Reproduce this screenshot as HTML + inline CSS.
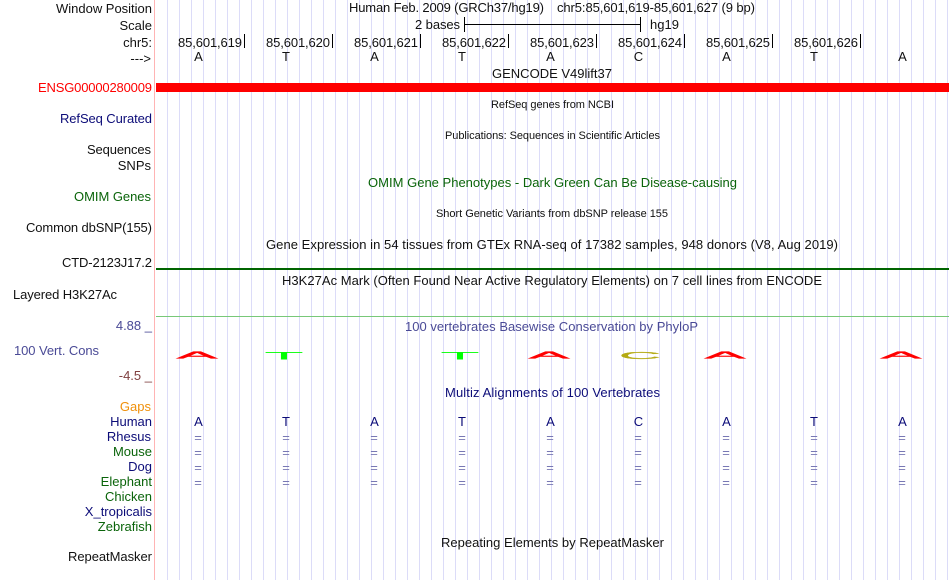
<!DOCTYPE html>
<html><head><meta charset="utf-8"><style>
html,body{margin:0;padding:0;background:#fff;width:950px;height:580px;overflow:hidden}
#p{position:absolute;left:154px;top:0;width:1px;height:580px;background:#ffb4b4}
svg{position:absolute;left:0;top:0}
text{font-family:"Liberation Sans",sans-serif;font-size:13px;fill:#111}
.r{text-anchor:end}
.m{text-anchor:middle}
.s{font-size:11px}
.n{fill:#0c0c78}
.g{fill:#0a640a}
.v{fill:#4a4a96}
.e{fill:#7878b4;font-size:13px;text-anchor:middle}
</style></head><body>
<div id="p"></div>
<svg width="950" height="580" viewBox="0 0 950 580" shape-rendering="auto">
<defs><pattern id="gl" x="167" y="0" width="12" height="580" patternUnits="userSpaceOnUse"><rect x="0" y="0" width="1" height="580" fill="#dcdcf8"/></pattern></defs>
<rect x="167" y="0" width="783" height="580" fill="url(#gl)" shape-rendering="crispEdges"/>
<rect x="156" y="83" width="793" height="9" fill="#f00"/>
<rect x="156" y="268" width="793" height="2" fill="#006400"/>
<rect x="156" y="316" width="793" height="1" fill="#78c878"/>
<path d="M464.5 17V32M464.5 24.5H640.5M640.5 17V32M244.5 34V48M332.5 34V48M420.5 34V48M508.5 34V48M596.5 34V48M684.5 34V48M772.5 34V48M860.5 34V48" stroke="#000" fill="none"/>

<text class="r" x="152" y="13" textLength="96">Window Position</text>
<text class="r" x="152" y="30">Scale</text>
<text class="r" x="152" y="47">chr5:</text>
<text class="r" x="151" y="63">---&gt;</text>
<text class="r" x="152" y="92" style="fill:#f00" textLength="114">ENSG00000280009</text>
<text class="r n" x="152" y="123" textLength="92">RefSeq Curated</text>
<text class="r" x="151" y="154" textLength="64">Sequences</text>
<text class="r" x="151" y="170">SNPs</text>
<text class="r g" x="151" y="201" textLength="77">OMIM Genes</text>
<text class="r" x="152" y="232" textLength="126">Common dbSNP(155)</text>
<text class="r" x="152" y="267" textLength="90">CTD-2123J17.2</text>
<text x="13" y="299" textLength="104">Layered H3K27Ac</text>
<text class="r v" x="152" y="330">4.88 _</text>
<text class="v" x="14" y="355" textLength="85">100 Vert. Cons</text>
<text class="r" x="152" y="380" style="fill:#804040">-4.5 _</text>
<text class="r" x="151" y="411" style="fill:#f0900a">Gaps</text>
<text class="r n" x="152" y="426">Human</text>
<text class="r n" x="151" y="441">Rhesus</text>
<text class="r g" x="152" y="456">Mouse</text>
<text class="r n" x="152" y="471">Dog</text>
<text class="r g" x="152" y="486">Elephant</text>
<text class="r g" x="152" y="501">Chicken</text>
<text class="r n" x="152" y="516">X_tropicalis</text>
<text class="r g" x="152" y="531">Zebrafish</text>
<text class="r" x="152" y="561" textLength="84">RepeatMasker</text>

<text x="349" y="12" textLength="195">Human Feb. 2009 (GRCh37/hg19)</text>
<text x="557" y="12" textLength="198">chr5:85,601,619-85,601,627 (9 bp)</text>
<text x="415" y="29" textLength="45">2 bases</text>
<text x="650" y="29">hg19</text>
<text x="178" y="47" textLength="64">85,601,619</text>
<text x="266" y="47" textLength="64">85,601,620</text>
<text x="354" y="47" textLength="64">85,601,621</text>
<text x="442" y="47" textLength="64">85,601,622</text>
<text x="530" y="47" textLength="64">85,601,623</text>
<text x="618" y="47" textLength="64">85,601,624</text>
<text x="706" y="47" textLength="64">85,601,625</text>
<text x="794" y="47" textLength="64">85,601,626</text>
<text class="m" x="198.5" y="61">A</text><text class="m" x="286" y="61">T</text><text class="m" x="374.5" y="61">A</text><text class="m" x="462" y="61">T</text><text class="m" x="550.5" y="61">A</text><text class="m" x="638.5" y="61">C</text><text class="m" x="726.5" y="61">A</text><text class="m" x="814" y="61">T</text><text class="m" x="902.5" y="61">A</text>

<text x="492" y="78" textLength="120">GENCODE V49lift37</text>
<text class="s" x="491" y="108" textLength="123">RefSeq genes from NCBI</text>
<text class="s" x="445" y="139" textLength="215">Publications: Sequences in Scientific Articles</text>
<text class="g" x="368" y="187" textLength="369">OMIM Gene Phenotypes - Dark Green Can Be Disease-causing</text>
<text class="s" x="436" y="217" textLength="232">Short Genetic Variants from dbSNP release 155</text>
<text x="266" y="249" textLength="572">Gene Expression in 54 tissues from GTEx RNA-seq of 17382 samples, 948 donors (V8, Aug 2019)</text>
<text x="282" y="285" textLength="540">H3K27Ac Mark (Often Found Near Active Regulatory Elements) on 7 cell lines from ENCODE</text>
<text class="v" x="405" y="331" textLength="293">100 vertebrates Basewise Conservation by PhyloP</text>
<text class="n" x="445" y="397" textLength="215">Multiz Alignments of 100 Vertebrates</text>
<text x="441" y="547" textLength="223">Repeating Elements by RepeatMasker</text>

<text transform="translate(197 358.5) scale(4.7,.8)" text-anchor="middle" style="fill:#f00;stroke:#f00;stroke-width:.35">A</text>
<text transform="translate(284 359.5) scale(5,.85)" text-anchor="middle" style="fill:#0f0">T</text>
<text transform="translate(460 359.5) scale(5,.85)" text-anchor="middle" style="fill:#0f0">T</text>
<text transform="translate(549 358.5) scale(4.7,.8)" text-anchor="middle" style="fill:#f00;stroke:#f00;stroke-width:.35">A</text>
<text transform="translate(640 359) scale(4.5,.8)" text-anchor="middle" style="fill:#b4aa14;stroke:#b4aa14;stroke-width:.25">C</text>
<text transform="translate(725 358.5) scale(4.7,.8)" text-anchor="middle" style="fill:#f00;stroke:#f00;stroke-width:.35">A</text>
<text transform="translate(901 358.5) scale(4.7,.8)" text-anchor="middle" style="fill:#f00;stroke:#f00;stroke-width:.35">A</text>

<text class="m n" x="198.5" y="426">A</text><text class="m n" x="286" y="426">T</text><text class="m n" x="374.5" y="426">A</text><text class="m n" x="462" y="426">T</text><text class="m n" x="550.5" y="426">A</text><text class="m n" x="638.5" y="426">C</text><text class="m n" x="726.5" y="426">A</text><text class="m n" x="814" y="426">T</text><text class="m n" x="902.5" y="426">A</text>

<text class="e" x="198" y="442">=</text><text class="e" x="286" y="442">=</text><text class="e" x="374" y="442">=</text><text class="e" x="462" y="442">=</text><text class="e" x="550" y="442">=</text><text class="e" x="638" y="442">=</text><text class="e" x="726" y="442">=</text><text class="e" x="814" y="442">=</text><text class="e" x="902" y="442">=</text>
<text class="e" x="198" y="457">=</text><text class="e" x="286" y="457">=</text><text class="e" x="374" y="457">=</text><text class="e" x="462" y="457">=</text><text class="e" x="550" y="457">=</text><text class="e" x="638" y="457">=</text><text class="e" x="726" y="457">=</text><text class="e" x="814" y="457">=</text><text class="e" x="902" y="457">=</text>
<text class="e" x="198" y="472">=</text><text class="e" x="286" y="472">=</text><text class="e" x="374" y="472">=</text><text class="e" x="462" y="472">=</text><text class="e" x="550" y="472">=</text><text class="e" x="638" y="472">=</text><text class="e" x="726" y="472">=</text><text class="e" x="814" y="472">=</text><text class="e" x="902" y="472">=</text>
<text class="e" x="198" y="487">=</text><text class="e" x="286" y="487">=</text><text class="e" x="374" y="487">=</text><text class="e" x="462" y="487">=</text><text class="e" x="550" y="487">=</text><text class="e" x="638" y="487">=</text><text class="e" x="726" y="487">=</text><text class="e" x="814" y="487">=</text><text class="e" x="902" y="487">=</text>
</svg>
</body></html>
